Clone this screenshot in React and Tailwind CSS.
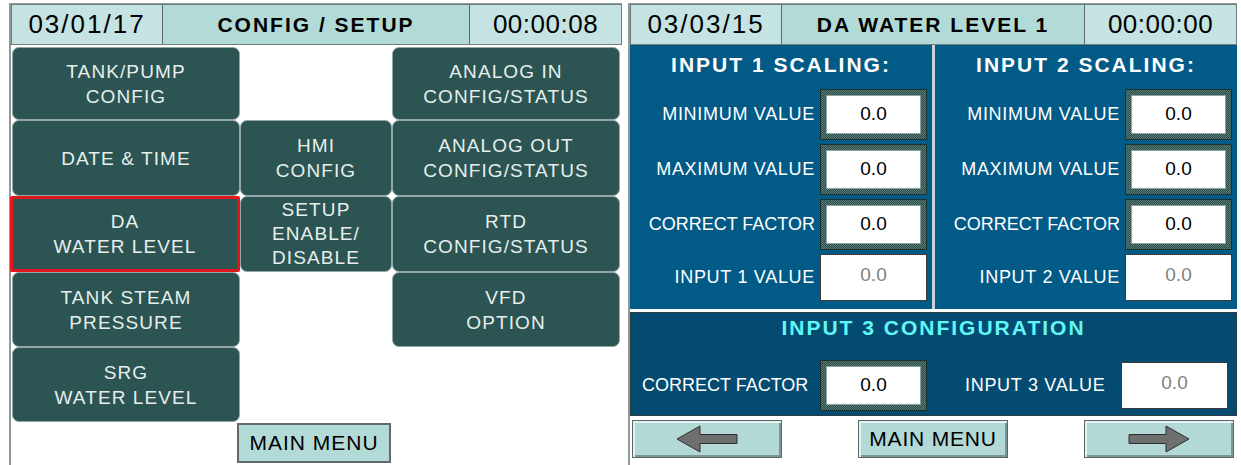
import React from "react";

const leftButtons = [
  { lines: ["TANK/PUMP", "CONFIG"], pos: "col-start-1 row-start-1" },
  { lines: ["ANALOG IN", "CONFIG/STATUS"], pos: "col-start-3 row-start-1" },
  { lines: ["DATE & TIME"], pos: "col-start-1 row-start-2" },
  { lines: ["HMI", "CONFIG"], pos: "col-start-2 row-start-2" },
  { lines: ["ANALOG OUT", "CONFIG/STATUS"], pos: "col-start-3 row-start-2" },
  { lines: ["DA", "WATER LEVEL"], pos: "col-start-1 row-start-3", active: true },
  { lines: ["SETUP", "ENABLE/", "DISABLE"], pos: "col-start-2 row-start-3", tight: true },
  { lines: ["RTD", "CONFIG/STATUS"], pos: "col-start-3 row-start-3" },
  { lines: ["TANK STEAM", "PRESSURE"], pos: "col-start-1 row-start-4" },
  { lines: ["VFD", "OPTION"], pos: "col-start-3 row-start-4" },
  { lines: ["SRG", "WATER LEVEL"], pos: "col-start-1 row-start-5" },
];

function MenuButton({ lines, pos, active, tight }) {
  return (
    <div
      className={`${pos} flex flex-col items-center justify-center bg-[#2c5452] text-[#e6efed] text-[19px] tracking-[1.1px] ${
        tight ? "leading-[24px]" : "leading-[25px]"
      } ${
        active
          ? "rounded-[2px] border-[3px] border-[#e3151d] -ml-[2px]"
          : "rounded-[7px] border border-[#93a8a6]"
      }`}
    >
      {lines.map((l) => (
        <span key={l}>{l}</span>
      ))}
    </div>
  );
}

function Header({ date, title, time }) {
  return (
    <div className="flex h-[41px] border border-[#6f7d7d] text-black">
      <div className="w-[151px] flex items-center justify-center bg-[#c6e3e3] border-r border-[#5d6a6a] text-[26px] tracking-[2px]">
        {date}
      </div>
      <div className="flex-1 flex items-center justify-center bg-[#b2dad6] border-r border-[#5d6a6a] text-[21px] font-bold tracking-[2px]">
        {title}
      </div>
      <div className="w-[151px] flex items-center justify-center bg-[#c6e3e3] text-[26px] tracking-[0.5px]">
        {time}
      </div>
    </div>
  );
}

function FramedInput({ value }) {
  return (
    <div className="w-[107px] h-[51px] border border-[#1c3130] p-[5px] bg-[repeating-conic-gradient(#2a4846_0_25%,#5b7f7b_0_50%)] bg-[length:2px_2px]">
      <div className="w-full h-full bg-white border border-[#88a3a0] flex items-center justify-center text-black text-[19px]">
        {value}
      </div>
    </div>
  );
}

function PlainValue({ value }) {
  return (
    <div className="w-[107px] h-[47px] bg-white border border-[#3a3a3a] flex items-center justify-center text-[#808080] text-[19px] pb-[4px]">
      {value}
    </div>
  );
}

function Row({ label, tight, children }) {
  return (
    <div className="flex items-center justify-end gap-[5px] pr-[5px]">
      <span className={`text-[18px] text-white ${tight ? "tracking-[0px]" : "tracking-[0.7px]"}`}>
        {label}
      </span>
      {children}
    </div>
  );
}

function ScalingPanel({ n }) {
  return (
    <div className="flex-1 bg-[#025a87] flex flex-col">
      <div className="h-[40px] flex items-center justify-center text-white font-bold text-[21px] tracking-[2px]">
        INPUT {n} SCALING:
      </div>
      <div className="flex flex-col gap-[4px] pt-[4px]">
        <Row label="MINIMUM VALUE">
          <FramedInput value="0.0" />
        </Row>
        <Row label="MAXIMUM VALUE">
          <FramedInput value="0.0" />
        </Row>
        <Row label="CORRECT FACTOR" tight>
          <FramedInput value="0.0" />
        </Row>
        <Row label={`INPUT ${n} VALUE`}>
          <PlainValue value="0.0" />
        </Row>
      </div>
    </div>
  );
}

function Arrow({ dir }) {
  return (
    <svg width="62" height="28" viewBox="0 0 62 28">
      <polygon
        points={
          dir === "left"
            ? "1,14 24,1 24,9.5 61,9.5 61,18.5 24,18.5 24,27"
            : "61,14 38,1 38,9.5 1,9.5 1,18.5 38,18.5 38,27"
        }
        fill="#6f6f6f"
        stroke="#2f2f2f"
        strokeWidth="1"
      />
    </svg>
  );
}

function NavButton({ children }) {
  return (
    <div className="w-[150px] h-[38px] flex items-center justify-center bg-[#b2d9d5] border border-[#596867] shadow-[inset_2px_2px_0_#e2f2f0,inset_-2px_-2px_0_#7d9593] text-black text-[21px] tracking-[0.8px]">
      {children}
    </div>
  );
}

export default function App() {
  return (
    <div className="w-[1241px] h-[465px] bg-white flex pt-[3px] font-['Liberation_Sans',Arial,sans-serif] overflow-hidden">
      {/* config / setup screen */}
      <div className="ml-[9px] w-[613px] h-[462px] border-l-2 border-t border-[#8e9b9c] flex flex-col">
        <Header date="03/01/17" title="CONFIG / SETUP" time="00:00:08" />
        <div className="grid grid-cols-[228px_152px_228px] grid-rows-[73px_76px_76px_75px_75px] pl-[1px] pt-[2px]">
          {leftButtons.map((b) => (
            <MenuButton key={b.lines.join(" ")} {...b} />
          ))}
        </div>
        <div className="pl-[226px] pt-[1px]">
          <div className="w-[154px] h-[40px] flex items-center justify-center bg-[#b2dad6] border-2 border-[#5f6b6b] text-black text-[21px] tracking-[1px]">
            MAIN MENU
          </div>
        </div>
      </div>

      {/* DA water level screen */}
      <div className="ml-[6px] w-[609px] h-[462px] border-l-2 border-t border-[#8e9b9c] flex flex-col">
        <Header date="03/03/15" title="DA WATER LEVEL 1" time="00:00:00" />
        <div className="flex h-[264px] gap-[3px] bg-[#c9d3d7]">
          <ScalingPanel n={1} />
          <ScalingPanel n={2} />
        </div>
        <div className="mt-[3px] h-[104px] bg-[#034b70] border border-[#2a3b44] flex flex-col">
          <div className="h-[30px] flex items-center justify-center text-[#62f6f6] font-bold text-[21px] tracking-[2px]">
            INPUT 3 CONFIGURATION
          </div>
          <div className="flex items-center pl-[11px] pt-[17px]">
            <span className="w-[178px] text-white text-[18px]">CORRECT FACTOR</span>
            <FramedInput value="0.0" />
            <span className="ml-[38px] w-[156px] text-white text-[18px] tracking-[0.7px]">INPUT 3 VALUE</span>
            <PlainValue value="0.0" />
          </div>
        </div>
        <div className="flex justify-between pl-[2px] pr-[3px] pt-[4px]">
          <NavButton>
            <Arrow dir="left" />
          </NavButton>
          <NavButton>MAIN MENU</NavButton>
          <NavButton>
            <Arrow dir="right" />
          </NavButton>
        </div>
      </div>
    </div>
  );
}
